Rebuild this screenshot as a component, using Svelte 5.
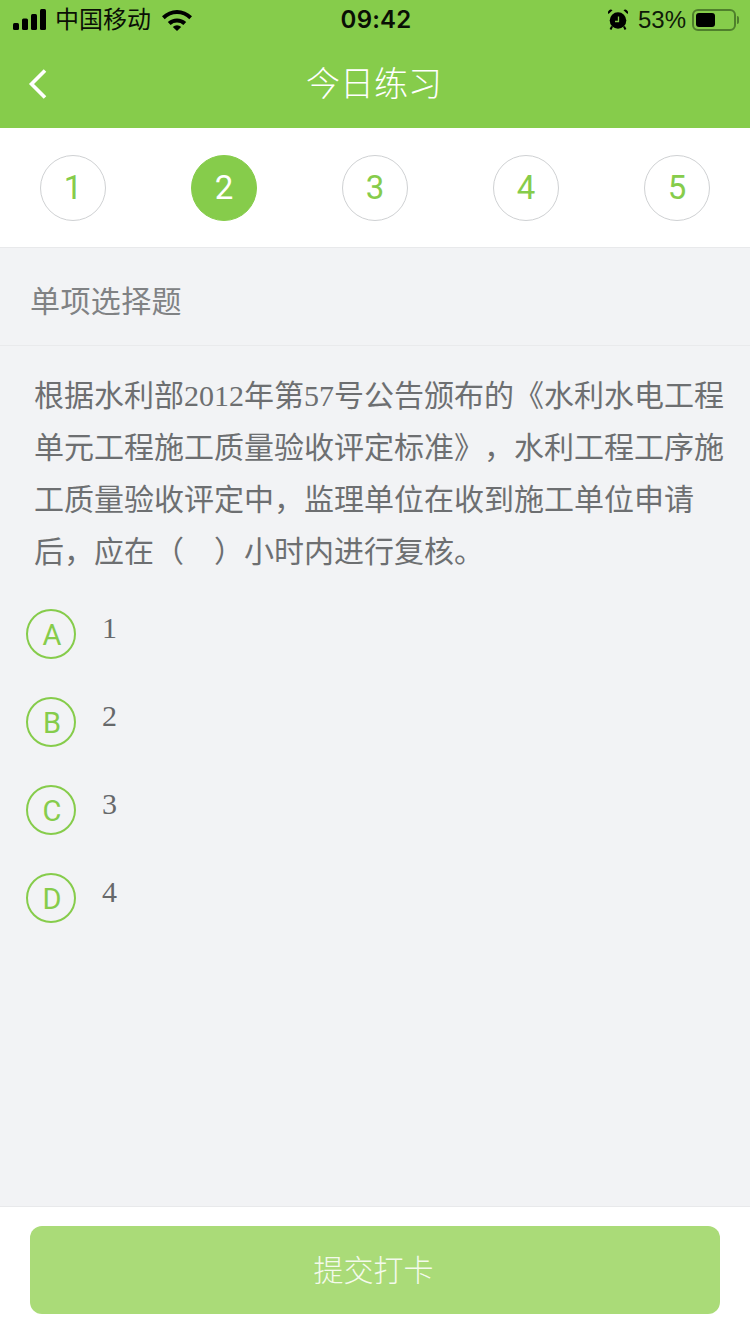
<script>
  const steps = [1, 2, 3, 4, 5];
  const current = 2;
  const options = [
    { key: 'A', value: '1' },
    { key: 'B', value: '2' },
    { key: 'C', value: '3' },
    { key: 'D', value: '4' }
  ];
</script>

<div class="page">
  <header class="head">
    <div class="status">
      <div class="side">
        <svg class="signal" width="33" height="21" viewBox="0 0 33 21">
          <rect x="0" y="14" width="6" height="7" rx="1.500" />
          <rect x="9" y="9.500" width="6" height="11.500" rx="1.500" />
          <rect x="18" y="5" width="6" height="16" rx="1.500" />
          <rect x="27" y="0" width="6" height="21" rx="1.500" />
        </svg>
        <span class="carrier">中国移动</span>
        <svg class="wifi" width="30" height="22" viewBox="0 0 30 22">
          <path d="M0 7.200a21.500 21.500 0 0 1 30 0l-2.700 3a17.200 17.200 0 0 0-24.600 0z" />
          <path d="M5.800 13a13.500 13.500 0 0 1 18.400 0l-2.800 3a9.500 9.500 0 0 0-12.800 0z" />
          <path d="M10.800 18a6 6 0 0 1 8.400 0L15 22z" />
        </svg>
      </div>
      <span class="time">09:42</span>
      <div class="side right">
        <svg class="alarm" width="20" height="21" viewBox="0 0 20 21">
          <circle cx="10" cy="11.500" r="8.300" />
          <path d="M0.500 5 4.500 1.200a2.800 2.800 0 0 0-4 3.800zM19.500 5 15.500 1.200a2.800 2.800 0 0 1 4 3.800z" />
          <path d="M4 17.500 2.500 20.500M16 17.500l1.500 3" class="feet" />
          <path d="M10.500 7.500V12.500H7" class="hands" />
        </svg>
        <span class="pct">53%</span>
        <div class="battery"><div class="level"></div></div>
        <div class="nub"></div>
      </div>
    </div>
    <nav class="nav">
      <svg class="back" width="20" height="32" viewBox="0 0 20 32">
        <path d="M17 2.500 3.500 16 17 29.500" />
      </svg>
      <h1>今日练习</h1>
    </nav>
  </header>

  <section class="steps">
    {#each steps as s}
      <div class="step" class:on={s === current}>{s}</div>
    {/each}
  </section>

  <div class="kind">单项选择题</div>

  <main class="body">
    <p class="question">根据水利部2012年第57号公告颁布的《水利水电工程单元工程施工质量验收评定标准》，水利工程工序施工质量验收评定中，监理单位在收到施工单位申请后，应在（&nbsp;&nbsp;&nbsp;&nbsp;）小时内进行复核。</p>
    <ul class="options">
      {#each options as o}
        <li>
          <span class="badge">{o.key}</span>
          <span class="val">{o.value}</span>
        </li>
      {/each}
    </ul>
  </main>

  <footer class="foot">
    <button class="submit">提交打卡</button>
  </footer>
</div>

<style>
  :global(body) {
    margin: 0;
    background: #f2f3f5;
  }
  .page {
    width: 750px;
    height: 1334px;
    display: flex;
    flex-direction: column;
    background: #f2f3f5;
    font-family: "Liberation Sans", "Noto Sans CJK SC", sans-serif;
    overflow: hidden;
    text-spacing-trim: space-all;
  }
  .head {
    background: #86cc4b;
    height: 128px;
    flex: none;
  }
  .status {
    height: 40px;
    padding: 0 11px 0 13px;
    display: grid;
    grid-template-columns: 1fr auto 1fr;
    align-items: center;
    color: #0a0f05;
  }
  .side {
    display: flex;
    align-items: center;
  }
  .right {
    justify-content: flex-end;
  }
  .signal {
    fill: #000;
    margin-right: 9px;
    margin-top: -1px;
  }
  .carrier {
    font-size: 24px;
    line-height: 40px;
    margin-top: -1px;
  }
  .wifi {
    fill: #000;
    margin-left: 11px;
    margin-top: -1px;
  }
  .time {
    font-size: 24px;
    margin-top: -1px;
    font-family: "Inter", "Liberation Sans", sans-serif;
    font-weight: 600;
    letter-spacing: 0.200px;
  }
  .alarm {
    fill: #000;
    margin-right: 10px;
    margin-top: -2px;
  }
  .feet {
    fill: none;
    stroke: #000;
    stroke-width: 2;
  }
  .hands {
    fill: none;
    stroke: #86cc4b;
    stroke-width: 1.300;
  }
  .pct {
    font-size: 24px;
    margin-right: 6px;
    margin-top: -1px;
    color: #0e1a08;
  }
  .battery {
    width: 44px;
    height: 22px;
    box-sizing: border-box;
    border: 2px solid #4f7f2c;
    border-radius: 6px;
    padding: 2px;
    margin-top: -1px;
  }
  .level {
    width: 19px;
    height: 14px;
    background: #000;
    border-radius: 3px;
  }
  .nub {
    width: 2px;
    height: 8px;
    background: #4f7f2c;
    border-radius: 0 2px 2px 0;
    margin: -1px 0 0 1px;
  }
  .nav {
    position: relative;
    height: 88px;
    display: flex;
    align-items: center;
    justify-content: center;
  }
  .back {
    position: absolute;
    left: 28px;
    top: 28px;
    fill: none;
    stroke: #fff;
    stroke-width: 3.600;
  }
  h1 {
    margin: 0 2px 4px 0;
    font-size: 34px;
    font-weight: 300;
    color: #fff;
    line-height: 84px;
    font-family: "Noto Sans CJK SC", sans-serif;
  }
  .steps {
    flex: none;
    height: 119px;
    background: #fff;
    border-bottom: 1px solid #e8e9eb;
    padding: 0 40px;
    display: flex;
    justify-content: space-between;
    align-items: center;
    box-sizing: content-box;
  }
  .step {
    width: 66px;
    height: 66px;
    box-sizing: border-box;
    border: 1px solid #cfd1d3;
    border-radius: 50%;
    display: flex;
    align-items: center;
    justify-content: center;
    font-family: "Roboto", sans-serif;
    font-weight: 400;
    font-size: 33px;
    color: #86cc4b;
  }
  .step.on {
    background: #86cc4b;
    border-color: #86cc4b;
    color: #fff;
  }
  .kind {
    flex: none;
    height: 97px;
    line-height: 102px;
    padding-left: 30px;
    font-size: 30px;
    letter-spacing: 0.400px;
    color: #808284;
    border-bottom: 1px solid #e9eaec;
    font-family: "Noto Sans CJK SC", sans-serif;
    font-weight: 400;
  }
  .body {
    flex: 1;
    padding: 24px 25px 0 0;
  }
  .question {
    margin: 0;
    padding-left: 34px;
    font-size: 30px;
    line-height: 52px;
    color: #6d6f71;
    font-family: "Liberation Serif", "Noto Sans CJK SC", serif;
  }
  .options {
    list-style: none;
    margin: 31px 0 0;
    padding: 0 0 0 26px;
    display: flex;
    flex-direction: column;
    gap: 38px;
  }
  li {
    display: flex;
    height: 50px;
  }
  .badge {
    width: 50px;
    height: 50px;
    box-sizing: border-box;
    border: 2px solid #86cc4b;
    border-radius: 50%;
    color: #86cc4b;
    font-family: "Roboto", sans-serif;
    font-weight: 400;
    font-size: 29px;
    padding: 1px 0 0 2px;
    display: flex;
    align-items: center;
    justify-content: center;
  }
  .val {
    margin-left: 26px;
    font-size: 30px;
    line-height: 38px;
    color: #66686a;
    font-family: "Liberation Serif", serif;
  }
  .foot {
    flex: none;
    height: 128px;
    background: #fff;
    border-top: 1px solid #e8e9eb;
    padding: 19px 30px 0;
    box-sizing: border-box;
  }
  .submit {
    display: block;
    width: 100%;
    height: 88px;
    border: 0;
    border-radius: 12px;
    background: #aadb78;
    color: #f4faec;
    font-size: 30px;
    padding: 0 3px 4px 0;
    font-family: "Noto Sans CJK SC", sans-serif;
    font-weight: 300;
  }
</style>
